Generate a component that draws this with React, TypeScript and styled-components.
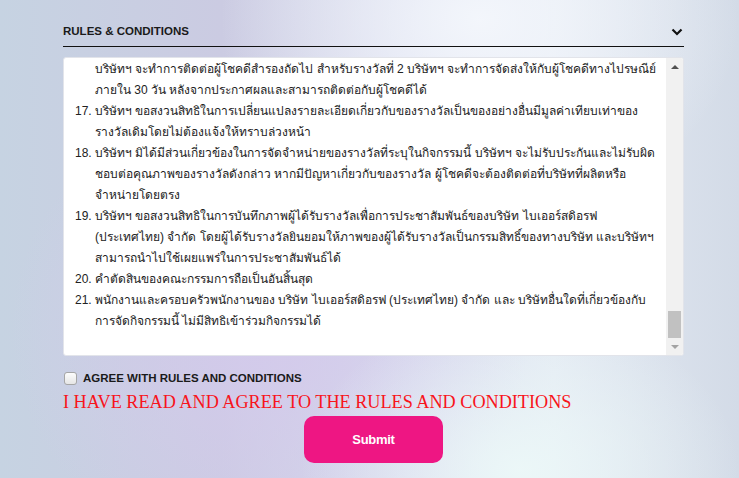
import React from "react";
import styled, { createGlobalStyle } from "styled-components";

const GlobalStyle = createGlobalStyle`
  html, body { margin: 0; padding: 0; }
  body { font-family: "Liberation Sans", Arial, sans-serif; }
`;

const Page = styled.div`
  width: 739px;
  height: 478px;
  box-sizing: border-box;
  padding: 0 55px 0 63px;
  overflow: hidden;
  background:
    radial-gradient(ellipse 260px 200px at 480px 20px, rgba(244, 247, 252, 0.95), rgba(244, 247, 252, 0) 100%),
    radial-gradient(ellipse 220px 160px at 520px 470px, rgba(236, 248, 248, 0.95), rgba(236, 248, 248, 0) 100%),
    radial-gradient(ellipse 260px 240px at 270px 330px, rgba(212, 202, 236, 0.95), rgba(212, 202, 236, 0) 100%),
    linear-gradient(90deg, #c6d3e2 0%, #cbcbe2 30%, #d9dcee 55%, #e4eaf3 75%, #d3dbe7 100%);
`;

const Column = styled.div`
  width: 621px;
  display: flex;
  flex-direction: column;
`;

const Header = styled.div`
  display: flex;
  align-items: center;
  justify-content: space-between;
  padding: 23px 0 7px;
  border-bottom: 1px solid #111;
`;

const Title = styled.div`
  font-family: "Liberation Sans", Arial, sans-serif;
  font-weight: bold;
  font-size: 11.5px;
  line-height: 16px;
  color: #1a1a1a;
`;

const Chevron = styled.svg`
  width: 12px;
  height: 8px;
  margin-right: 1px;
  margin-top: 1px;
`;

const TextBox = styled.div`
  margin-top: 10px;
  height: 299px;
  box-sizing: border-box;
  background: #fff;
  border: 1px solid #e2e4ea;
  border-radius: 3px;
  display: flex;
  overflow: hidden;
`;

const Content = styled.div`
  flex: 1;
  min-width: 0;
  overflow: hidden;
  padding: 1px 0 0 11px;
  font-family: "Liberation Sans", Arial, sans-serif;
  font-size: 12px;
  line-height: 21px;
  color: #222;
`;

const Item = styled.div`
  display: grid;
  grid-template-columns: 20px 1fr;
`;

const Num = styled.span`
  white-space: nowrap;
`;

const Line = styled.div`
  white-space: nowrap;
`;

const ScrollTrack = styled.div`
  flex: 0 0 17px;
  width: 17px;
  background: #f1f1f1;
  display: flex;
  flex-direction: column;
`;

const ArrowBtn = styled.div<{ $down?: boolean }>`
  height: 17px;
  display: flex;
  align-items: center;
  justify-content: center;
  &::after {
    content: "";
    width: 0;
    height: 0;
    border-left: 4px solid transparent;
    border-right: 4px solid transparent;
    ${(p) =>
      p.$down
        ? "border-top: 4px solid #a3a3a3;"
        : "border-bottom: 4px solid #505050;"}
  }
`;

const Spacer = styled.div`
  flex: 1;
`;

const Thumb = styled.div`
  height: 27px;
  margin: 0 2px;
  background: #c1c1c1;
`;

const AgreeRow = styled.label`
  margin-top: 15px;
  display: flex;
  align-items: center;
  gap: 6px;
  height: 14px;
`;

const Check = styled.input`
  appearance: none;
  -webkit-appearance: none;
  margin: 0 0 0 1px;
  width: 13px;
  height: 13px;
  box-sizing: border-box;
  border: 1px solid #a6a6a6;
  border-radius: 3px;
  background: linear-gradient(#fcfcfc, #e6e6e6);
`;

const AgreeText = styled.span`
  font-family: "Liberation Sans", Arial, sans-serif;
  font-weight: bold;
  font-size: 11.5px;
  color: #1a1a1a;
`;

const Notice = styled.div`
  margin-top: 6px;
  font-family: "Liberation Serif", "Times New Roman", serif;
  font-size: 18.2px;
  line-height: 22px;
  color: #f8141c;
`;

const SubmitButton = styled.button`
  align-self: center;
  margin-top: 3px;
  width: 139px;
  height: 47px;
  border: none;
  border-radius: 10px;
  background: #ee1683;
  color: #fff;
  font-family: "Liberation Sans", Arial, sans-serif;
  font-weight: bold;
  font-size: 13px;
  letter-spacing: -0.3px;
`;

const items: { num?: string; lines: string[] }[] = [
  {
    lines: [
      "บริษัทฯ จะทำการติดต่อผู้โชคดีสำรองถัดไป สำหรับรางวัลที่ 2 บริษัทฯ จะทำการจัดส่งให้กับผู้โชคดีทางไปรษณีย์",
      "ภายใน 30 วัน หลังจากประกาศผลและสามารถติดต่อกับผู้โชคดีได้",
    ],
  },
  {
    num: "17.",
    lines: [
      "บริษัทฯ ขอสงวนสิทธิในการเปลี่ยนแปลงรายละเอียดเกี่ยวกับของรางวัลเป็นของอย่างอื่นมีมูลค่าเทียบเท่าของ",
      "รางวัลเดิมโดยไม่ต้องแจ้งให้ทราบล่วงหน้า",
    ],
  },
  {
    num: "18.",
    lines: [
      "บริษัทฯ มิได้มีส่วนเกี่ยวข้องในการจัดจำหน่ายของรางวัลที่ระบุในกิจกรรมนี้ บริษัทฯ จะไม่รับประกันและไม่รับผิด",
      "ชอบต่อคุณภาพของรางวัลดังกล่าว หากมีปัญหาเกี่ยวกับของรางวัล ผู้โชคดีจะต้องติดต่อที่บริษัทที่ผลิตหรือ",
      "จำหน่ายโดยตรง",
    ],
  },
  {
    num: "19.",
    lines: [
      "บริษัทฯ ขอสงวนสิทธิในการบันทึกภาพผู้ได้รับรางวัลเพื่อการประชาสัมพันธ์ของบริษัท ไบเออร์สดิอรฟ",
      "(ประเทศไทย) จำกัด โดยผู้ได้รับรางวัลยินยอมให้ภาพของผู้ได้รับรางวัลเป็นกรรมสิทธิ์ของทางบริษัท และบริษัทฯ",
      "สามารถนำไปใช้เผยแพร่ในการประชาสัมพันธ์ได้",
    ],
  },
  { num: "20.", lines: ["คำตัดสินของคณะกรรมการถือเป็นอันสิ้นสุด"] },
  {
    num: "21.",
    lines: [
      "พนักงานและครอบครัวพนักงานของ บริษัท ไบเออร์สดิอรฟ (ประเทศไทย) จำกัด และ บริษัทอื่นใดที่เกี่ยวข้องกับ",
      "การจัดกิจกรรมนี้ ไม่มีสิทธิเข้าร่วมกิจกรรมได้",
    ],
  },
];

export default function App() {
  return (
    <>
      <GlobalStyle />
      <Page>
        <Column>
          <Header>
            <Title>RULES &amp; CONDITIONS</Title>
            <Chevron viewBox="0 0 12 8">
              <path d="M1.5 1.5 L6 6 L10.5 1.5" fill="none" stroke="#111" strokeWidth="2.2" />
            </Chevron>
          </Header>
          <TextBox>
            <Content>
              {items.map((it, i) => (
                <Item key={i}>
                  <Num>{it.num ?? ""}</Num>
                  <div>
                    {it.lines.map((l, j) => (
                      <Line key={j}>{l}</Line>
                    ))}
                  </div>
                </Item>
              ))}
            </Content>
            <ScrollTrack>
              <ArrowBtn />
              <Spacer />
              <Thumb />
              <ArrowBtn $down />
            </ScrollTrack>
          </TextBox>
          <AgreeRow>
            <Check type="checkbox" />
            <AgreeText>AGREE WITH RULES AND CONDITIONS</AgreeText>
          </AgreeRow>
          <Notice>I HAVE READ AND AGREE TO THE RULES AND CONDITIONS</Notice>
          <SubmitButton>Submit</SubmitButton>
        </Column>
      </Page>
    </>
  );
}
